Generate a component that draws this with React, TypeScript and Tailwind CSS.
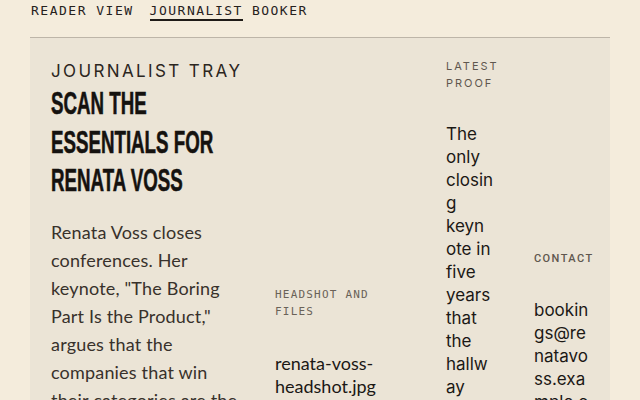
export default function App() {
  const mono = "font-['DejaVu_Sans_Mono','Liberation_Mono',monospace]";
  return (
    <div className="min-h-screen bg-[#f4ecdc] text-[#1f1b17]">
      <nav className={`flex items-start pl-[31px] pr-[30px] pt-[3px] text-[13px] leading-4 tracking-[1.5px] text-[#26211c] ${mono}`}>
        <span className="mr-4">READER VIEW</span>
        <span className="border-b-2 border-[#1f1b17]">JOURNALIST</span>
        <span className="ml-[9px]">BOOKER</span>
      </nav>
      <section className="mx-[30px] mt-4 grid min-h-[400px] grid-cols-[192px_139px_56px_56px] gap-x-8 border-t border-[#bdb5a8] bg-[#ebe4d6] pl-[21px] pr-5 pt-5">
        <div>
          <p className="font-['Inter',sans-serif] text-[17px] leading-[26px] tracking-[0.14em] text-[#2b2621]">JOURNALIST TRAY</p>
          <h1 className="w-[328px] origin-top-left scale-x-[0.585] font-['Liberation_Sans',sans-serif] text-[32px] font-bold uppercase leading-[38.5px] text-[#15120f] [-webkit-text-stroke:0.6px_#15120f]">
            Scan the essentials for Renata Voss
          </h1>
          <p className="mt-[18px] font-['Lato',sans-serif] text-[18px] leading-[28px] tracking-[0.01em] text-[#38312b]">
            Renata Voss closes conferences. Her keynote, "The Boring Part Is the Product," argues that the companies that win their categories are the ones that obsess over the unglamorous parts.
          </p>
        </div>
        <div className="pt-[228px]">
          <p className={`text-[11px] leading-[17px] tracking-[1.2px] text-[#6a6258] ${mono}`}>HEADSHOT AND FILES</p>
          <p className="mt-8 font-['Lato',sans-serif] text-[18px] leading-[23px] text-[#1b1815]">renata-voss-headshot.jpg</p>
        </div>
        <div>
          <p className="font-['Inter',sans-serif] text-[11px] leading-[17px] tracking-[0.18em] text-[#5f574e]">LATEST PROOF</p>
          <p className="mt-[31px] max-w-[48px] font-['Inter',sans-serif] text-[17px] leading-[23px] text-[#1b1815] [overflow-wrap:anywhere]">
            The only closing keynote in five years that the hallway was still talking about the next morning.
          </p>
        </div>
        <div className="pt-[192px]">
          <p className="font-['Roboto',sans-serif] text-[11px] font-medium leading-[17px] tracking-[0.13em] text-[#5f574e]">CONTACT</p>
          <p className="mt-8 font-['Inter',sans-serif] text-[17px] leading-[23px] text-[#1b1815] [overflow-wrap:anywhere]">bookings@renatavoss.example.com</p>
        </div>
      </section>
    </div>
  );
}
